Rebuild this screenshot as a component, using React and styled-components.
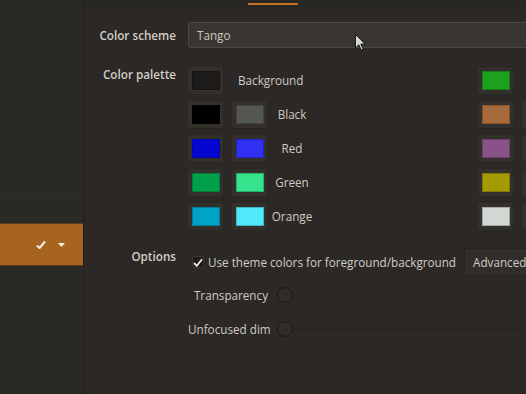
import React from 'react'
import styled, { createGlobalStyle } from 'styled-components'

const GlobalStyle = createGlobalStyle`
    html, body {
        margin: 0;
        padding: 0;
        background: #2b2825;
    }
    body {
        font-family: "Open Sans", "Noto Sans", sans-serif;
        font-size: 11.7px;
        color: #d2cdc5;
    }
`

const leftRows = [
    { colors: ['#1e1c1a'], name: 'Background' },
    { colors: ['#000000', '#555753'], name: 'Black' },
    { colors: ['#0606d2', '#3030f2'], name: 'Red' },
    { colors: ['#00a04c', '#36e28c'], name: 'Green' },
    { colors: ['#00a2c8', '#52e8fc'], name: 'Orange' },
]

// right half: its labels fall outside the window
const rightRows = [
    { colors: ['#1ea01c'] },
    { colors: ['#a86a3a', '#c99a6e'] },
    { colors: ['#8a5088', '#a86ca4'] },
    { colors: ['#a49b00', '#d8d020'] },
    { colors: ['#d3d7d4', '#eeeeec'] },
]

const PaletteGroup = ({ rows }) => (
    <Group>
        {rows.map((row, index) => (
            <React.Fragment key={index}>
                {row.colors.map((color, i) => (
                    <Swatch key={i}>
                        <Fill style={{ background: color }} />
                    </Swatch>
                ))}
                <SwatchName wide={row.colors.length === 1}>{row.name}</SwatchName>
            </React.Fragment>
        ))}
    </Group>
)

const App = () => {
    return (
        <Window>
            <GlobalStyle />
            <Sidebar>
                <SideGroup />
                <SideItem>
                    <svg width="10" height="9" viewBox="0 0 10 9">
                        <path d="M1 5.5 L3.6 8 L9 1.5" stroke="#f4efe8" strokeWidth="2" fill="none" />
                    </svg>
                    <svg width="7" height="4" viewBox="0 0 7 4">
                        <path d="M0 0 H7 L3.5 4 Z" fill="#f4efe8" />
                    </svg>
                </SideItem>
            </Sidebar>
            <Main>
                <TabStrip>
                    <TabMark />
                </TabStrip>
                <Form>
                    <Label center>Color scheme</Label>
                    <Combo>Tango</Combo>

                    <Label>Color palette</Label>
                    <Palette>
                        <PaletteGroup rows={leftRows} />
                        <PaletteGroup rows={rightRows} />
                    </Palette>

                    <Label>Options</Label>
                    <Options>
                        <OptionLine>
                            <Check>
                                <svg width="10" height="9" viewBox="0 0 10 9">
                                    <path d="M1 5 L3.8 7.8 L9 1.2" stroke="#f0ebe3" strokeWidth="1.8" fill="none" />
                                </svg>
                            </Check>
                            <span>Use theme colors for foreground/background</span>
                            <Button>Advanced</Button>
                        </OptionLine>
                        <SubList>
                            <SubRow>
                                <SubLabel>Transparency</SubLabel>
                                <Knob />
                                <Groove />
                            </SubRow>
                            <SubRow>
                                <SubLabel>Unfocused dim</SubLabel>
                                <Knob />
                                <Groove strong />
                            </SubRow>
                        </SubList>
                    </Options>
                </Form>
                <Cursor>
                    <svg width="11" height="17" viewBox="0 0 11 17">
                        <path d="M0.5 0.5 L0.5 14 L3.8 10.8 L6.2 16 L8.2 15.1 L5.8 10 L10 10 Z" fill="#d8d8d8" stroke="#1a1a1a" strokeWidth="1" />
                    </svg>
                </Cursor>
            </Main>
        </Window>
    )
}

export default App



const Window = styled.div`
    display: flex;
    width: 526px;
    height: 394px;
    overflow: hidden;
    background: #2b2825;
`

const Sidebar = styled.div`
    flex: none;
    width: 83px;
    display: flex;
    flex-direction: column;
    background: #2b2926;
    border-right: 1px solid #201e1b;
`

const SideGroup = styled.div`
    height: 195px;
    border-bottom: 1px solid #2f2d29;
    margin-bottom: 27px;
`

const SideItem = styled.div`
    height: 41px;
    display: flex;
    align-items: center;
    justify-content: flex-end;
    gap: 12px;
    padding-right: 18px;
    background: #a7641f;
    border-top: 1px solid #5e3915;
    border-bottom: 1px solid #5e3915;
`

const Main = styled.div`
    position: relative;
    flex: 1;
    min-width: 0;
    overflow: hidden;
`

const TabStrip = styled.div`
    height: 6px;
    display: flex;
    align-items: flex-end;
    padding-left: 164px;
    background: #292724;
    border-bottom: 1px solid #232120;
`

const TabMark = styled.div`
    width: 50px;
    height: 2px;
    margin-bottom: 1px;
    background: #c0701f;
`

const Form = styled.div`
    display: grid;
    grid-template-columns: 92px 1fr;
    column-gap: 12px;
    row-gap: 18px;
    padding-top: 15px;
`

const Label = styled.div`
    text-align: right;
    font-weight: 600;
    line-height: 16px;
    white-space: nowrap;
    align-self: ${p => (p.center ? 'center' : 'start')};
`

const Combo = styled.div`
    height: 24px;
    display: flex;
    align-items: center;
    padding-left: 8px;
    margin-right: -60px;
    background: #393632;
    border: 1px solid #4a4641;
    border-radius: 2px;
    color: #cbc6be;
`

const Palette = styled.div`
    display: flex;
    gap: 170px;
    margin-top: 0.5px;
`

const Group = styled.div`
    flex: none;
    display: grid;
    grid-template-columns: 35px 35px 32px;
    grid-auto-rows: 27px;
    column-gap: 9px;
    row-gap: 7px;
`

const Swatch = styled.div`
    display: flex;
    align-items: center;
    justify-content: center;
    background: #33302c;
    border-radius: 2px;
    box-shadow: 0 0 1px #24221f;
`

const Fill = styled.div`
    width: 28px;
    height: 19px;
    box-shadow: inset 0 0 0 1px rgba(0, 0, 0, 0.22);
`

const SwatchName = styled.div`
    grid-column: ${p => (p.wide ? '2 / 4' : 'auto')};
    display: flex;
    align-items: center;
    justify-content: ${p => (p.wide ? 'flex-start' : 'center')};
    padding-left: ${p => (p.wide ? '6px' : '0')};
    white-space: nowrap;
    color: #cfcac2;
`

const Options = styled.div`
    display: flex;
    flex-direction: column;
    padding-left: 4px;
`

const OptionLine = styled.div`
    display: flex;
    align-items: center;
    height: 28px;
    white-space: nowrap;
    gap: 4px;
`

const Check = styled.div`
    flex: none;
    width: 12px;
    height: 12px;
    display: flex;
    align-items: center;
    justify-content: center;
    background: #1f1d1b;
    border: 1px solid #3a3733;
    border-radius: 2px;
    box-sizing: border-box;
    margin-top: 1px;
`

const Button = styled.div`
    flex: none;
    height: 26px;
    display: flex;
    align-items: center;
    padding: 0 8px;
    margin-left: 4px;
    background: #312e2a;
    border: 1px solid #262421;
    border-radius: 2px;
    color: #cfcac2;
`

const SubList = styled.div`
    display: flex;
    flex-direction: column;
    gap: 12px;
    padding-top: 8px;
    margin-left: -4px;
`

const SubRow = styled.div`
    height: 22px;
    display: flex;
    align-items: center;
`

const SubLabel = styled.div`
    width: 80px;
    text-align: right;
    white-space: nowrap;
    margin-right: 9px;
    color: #cfcac2;
`

const Knob = styled.div`
    flex: none;
    width: 14px;
    height: 14px;
    border-radius: 50%;
    background: #2f2c29;
    border: 1px solid #1b1917;
`

const Groove = styled.div`
    flex: 1;
    height: 1px;
    background: ${p => (p.strong ? '#252320' : '#282623')};
`

const Cursor = styled.div`
    position: absolute;
    left: 271px;
    top: 34px;
    line-height: 0;
`
